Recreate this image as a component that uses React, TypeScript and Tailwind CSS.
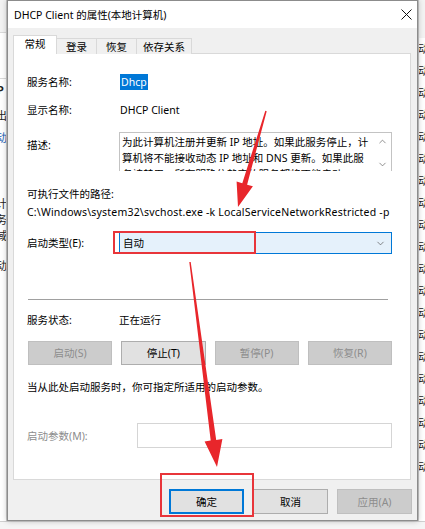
import React from 'react';
import { ChevronDown, ChevronUp } from 'lucide-react';

// builds a tapered arrow polygon from (x1,y1) to the tip (x2,y2)
const arrowPoints = (x1: number, y1: number, x2: number, y2: number, w0: number, w1: number, headLen: number, headHalf: number) => {
  const len = Math.hypot(x2 - x1, y2 - y1);
  const dx = (x2 - x1) / len;
  const dy = (y2 - y1) / len;
  const nx = -dy;
  const ny = dx;
  const bx = x2 - dx * headLen;
  const by = y2 - dy * headLen;
  const pts = [
    [x1 + nx * w0 / 2, y1 + ny * w0 / 2],
    [bx + nx * w1 / 2, by + ny * w1 / 2],
    [bx + nx * headHalf, by + ny * headHalf],
    [x2, y2],
    [bx - nx * headHalf, by - ny * headHalf],
    [bx - nx * w1 / 2, by - ny * w1 / 2],
    [x1 - nx * w0 / 2, y1 - ny * w0 / 2],
  ];
  return pts.map(p => `${p[0].toFixed(1)},${p[1].toFixed(1)}`).join(' ');
};

const tabs = [
  { label: '常规', w: 'w-[44px]', active: true },
  { label: '登录', w: 'w-[41px]', active: false },
  { label: '恢复', w: 'w-[41px]', active: false },
  { label: '依存关系', w: 'w-[56px]', active: false },
];

const serviceButtons = [
  { label: '启动(S)', enabled: false },
  { label: '停止(T)', enabled: true },
  { label: '暂停(P)', enabled: false },
  { label: '恢复(R)', enabled: false },
];

export default function App() {
  return (
    <div className="relative w-[425px] h-[529px] overflow-hidden bg-[#f0f0f0] font-['Noto_Sans','Noto_Sans_CJK_SC',sans-serif] text-[10.5px] text-black leading-[16px]">
      <div className="flex h-[521px]">
        {/* window behind, left edge */}
        <div className="w-[7px] bg-white overflow-hidden border-r border-[#c8c8c8] text-[11px] leading-[22px] text-[#222]">
          <div className="h-[33px] bg-[#f3f3f3] border-b border-[#dadada]" />
          <div className="h-[46px] border-b border-[#dadada]" />
          <div className="font-bold -ml-[3px]">P</div>
          <div className="-ml-[4px] mt-[4px]">出</div>
          <div className="-ml-[4px] text-[#1a5fb4]">动</div>
          <div className="h-[44px]" />
          <div className="-ml-[4px]">计</div>
          <div className="-ml-[4px] -mt-[6px]">务</div>
          <div className="-ml-[4px] -mt-[6px]">域</div>
          <div className="h-[8px]" />
          <div className="-ml-[4px]">动</div>
        </div>

        {/* dialog */}
        <div className="w-[411px] h-[521px] border border-[#8c8c8c] flex flex-col shadow-[0_0_6px_rgba(0,0,0,0.25)] relative z-10">
          <div className="h-[27px] bg-white flex items-center justify-between pl-[6px] pr-[5px] shrink-0">
            <span className="text-[10.5px]">DHCP Client 的属性(本地计算机)</span>
            <svg width="11" height="11" viewBox="0 0 11 11">
              <path d="M0.5 0.5 L10.5 10.5 M10.5 0.5 L0.5 10.5" stroke="#111" strokeWidth="1" />
            </svg>
          </div>

          <div className="flex-1 bg-[#f0f0f0] pl-[5px] pr-[6px] pt-[7px] flex flex-col">
            {/* tabs */}
            <div className="flex items-end h-[19px] -mb-px relative z-10">
              {tabs.map((t, i) => (
                <div
                  key={t.label}
                  className={`${t.w} ${i > 0 ? '-ml-px' : ''} ${
                    t.active
                      ? 'h-[19px] bg-white border border-b-0 border-[#d9d9d9] relative z-10 pb-[2px]'
                      : 'h-[16px] bg-[#f0f0f0] border border-b-0 border-[#d9d9d9]'
                  } flex items-center justify-center`}
                >
                  {t.label}
                </div>
              ))}
            </div>

            {/* panel */}
            <div className="h-[427px] bg-white border border-[#d9d9d9] pl-[13px] pr-[18px] pt-[20px]">
              <div className="flex h-[16px] items-center">
                <span className="w-[93px] shrink-0">服务名称:</span>
                <span className="bg-[#0078d7] text-white px-px">Dhcp</span>
              </div>

              <div className="flex h-[16px] items-center mt-[12px]">
                <span className="w-[93px] shrink-0">显示名称:</span>
                <span>DHCP Client</span>
              </div>

              <div className="flex mt-[14px]">
                <span className="w-[92px] shrink-0 pt-[5px]">描述:</span>
                <div className="flex-1 h-[39px] border border-[#c3c3c3] border-b-0 overflow-hidden flex">
                  <div className="flex-1 pl-[2px] pt-[1px] leading-[16px] whitespace-nowrap overflow-hidden">
                    <div>为此计算机注册并更新 IP 地址。如果此服务停止，计</div>
                    <div>算机将不能接收动态 IP 地址和 DNS 更新。如果此服</div>
                    <div>务被禁用，所有明确依赖它的服务都将不能启动。</div>
                  </div>
                  <div className="w-[17px] flex flex-col items-center pt-[3px] text-[#606060]">
                    <ChevronUp size={11} strokeWidth={1.5} />
                    <div className="h-[12px]" />
                    <ChevronDown size={11} strokeWidth={1.5} />
                  </div>
                </div>
              </div>

              <div className="h-[16px] mt-[15px]">可执行文件的路径:</div>
              <div className="h-[16px] mt-[2px] whitespace-nowrap tracking-[0.2px]">C:\Windows\system32\svchost.exe -k LocalServiceNetworkRestricted -p</div>

              <div className="flex items-center mt-[12px]">
                <span className="w-[92px] shrink-0">启动类型(E):</span>
                <div className="flex-1 h-[22px] bg-[#e5f1fb] border border-[#0078d7] flex items-center justify-between pl-[3px] pr-[5px]">
                  <span>自动</span>
                  <ChevronDown size={11} strokeWidth={1.5} className="text-[#555]" />
                </div>
              </div>

              <div className="h-px bg-[#a0a0a0] mt-[45px] ml-px mr-[4px]" />

              <div className="flex h-[16px] items-center mt-[12px]">
                <span className="w-[92px] shrink-0">服务状态:</span>
                <span>正在运行</span>
              </div>

              <div className="grid grid-cols-4 gap-[9px] mt-[13px] pl-px">
                {serviceButtons.map(b => (
                  <div
                    key={b.label}
                    className={`h-[24px] flex items-center justify-center border ${
                      b.enabled ? 'bg-[#e1e1e1] border-[#adadad] text-black' : 'bg-[#cccccc] border-[#bfbfbf] text-[#8d8d8d]'
                    }`}
                  >
                    {b.label}
                  </div>
                ))}
              </div>

              <div className="h-[16px] mt-[14px]">当从此处启动服务时，你可指定所适用的启动参数。</div>

              <div className="flex items-center mt-[28px]">
                <span className="w-[110px] shrink-0 text-[#8d8d8d]">启动参数(M):</span>
                <div className="flex-1 h-[25px] border border-[#d5d5d5] bg-white" />
              </div>
            </div>

            {/* dialog buttons */}
            <div className="flex justify-end gap-[9px] mt-[9px] -mr-[1px]">
              <div className="w-[75px] h-[25px] bg-[#e1e1e1] border-2 border-[#0078d7] flex items-center justify-center">确定</div>
              <div className="w-[75px] h-[25px] bg-[#e1e1e1] border border-[#adadad] flex items-center justify-center">取消</div>
              <div className="w-[75px] h-[25px] bg-[#cccccc] border border-[#bfbfbf] text-[#8d8d8d] flex items-center justify-center">应用(A)</div>
            </div>
          </div>
        </div>

        {/* window behind, right edge */}
        <div className="w-[7px] bg-white overflow-hidden border-l border-[#c8c8c8] text-[11px] leading-[22px] text-[#222]">
          <div className="h-[38px] bg-[#f3f3f3]" />
          {Array.from({ length: 20 }).map((_, i) => (
            <div key={i} className="-ml-[1px]">动</div>
          ))}
        </div>
      </div>
      <div className="h-[8px] bg-[#f5f5f5] border-t border-[#d0d0d0]" />

      {/* red annotations */}
      <div className="absolute left-[113px] top-[231px] w-[143px] h-[23px] border-2 border-[#e8353a] z-20" />
      <div className="absolute left-[160px] top-[473px] w-[94px] h-[44px] border-2 border-[#e8353a] z-20" />
      <svg className="absolute inset-0 z-30 pointer-events-none" width="425" height="529" viewBox="0 0 425 529">
        <polygon points={arrowPoints(266, 111, 238, 207, 1.5, 5, 24, 8.5)} fill="#e8262b" />
        <polygon points={arrowPoints(190, 262, 217, 467, 1.5, 5.5, 27, 9)} fill="#e8262b" />
      </svg>
    </div>
  );
}
